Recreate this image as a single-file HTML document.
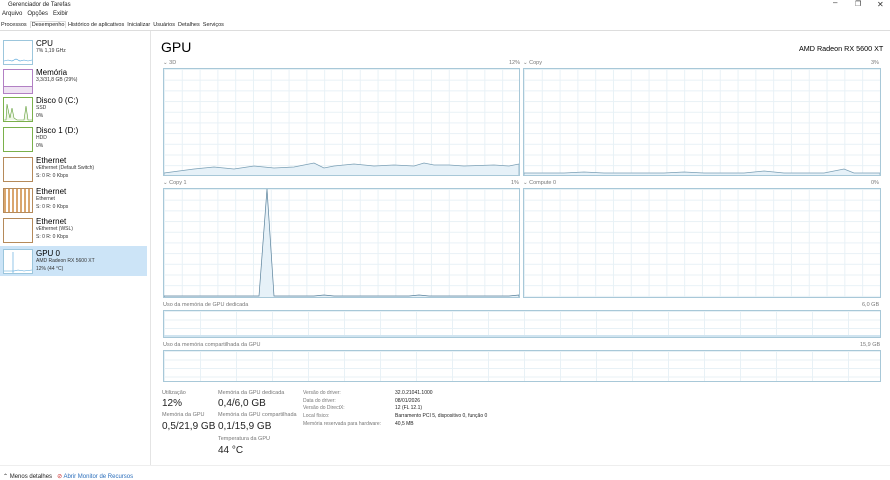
<!DOCTYPE html>
<html><head><meta charset="utf-8"><style>
*{margin:0;padding:0;box-sizing:border-box}
body{width:890px;height:480px;background:#fff;font-family:"Liberation Sans",sans-serif;color:#000;position:relative;overflow:hidden}
.a{position:absolute;white-space:nowrap}
.s{font-size:6px;color:#333}
.g{position:absolute;border:1px solid #a8c8d8;background-color:#fff;
background-image:linear-gradient(to right,#e8f1f6 1px,transparent 1px),linear-gradient(to bottom,#e8f1f6 1px,transparent 1px);
background-size:17.8px 10.7px}
.m{position:absolute;border:1px solid #a8c8d8;background-image:linear-gradient(to right,#e8f1f6 1px,transparent 1px),linear-gradient(to bottom,#e8f1f6 1px,transparent 1px);background-size:36px 8.5px}
.th{position:absolute;width:30px;height:25px;border:1px solid #9cc6dc;background:#fff}
.nm{font-size:8px}
.sb{font-size:5px;color:#333;line-height:8px}
.lab{font-size:5.5px;color:#777}
.val{font-size:10px;color:#222}
</style></head><body>
<div class="a s" style="left:8px;top:2px;color:#222">Gerenciador de Tarefas</div>
<div class="a s" style="left:2px;top:11px;color:#222">Arquivo&nbsp;&nbsp; Opções&nbsp;&nbsp; Exibir</div>
<div class="a" style="left:877px;top:0;font-size:8px;color:#333">✕</div>
<div class="a" style="left:855px;top:0;font-size:7px;color:#333">❐</div>
<div class="a" style="left:833px;top:-2px;font-size:8px;color:#333">–</div>
<div class="a" style="left:0;top:30px;width:890px;border-top:1px solid #ddd"></div>
<div class="a" style="left:1px;top:22px;color:#222;font-size:5.5px">Processos&nbsp; <span style="background:#fff;border:1px solid #ddd;border-bottom:none;padding:0 1px">Desempenho</span>&nbsp;Histórico de aplicativos&nbsp; Inicializar&nbsp; Usuários&nbsp; Detalhes&nbsp; Serviços</div>
<div class="a" style="left:150px;top:31px;height:434px;border-left:1px solid #e4e4e4"></div>

<div class="th" style="left:3px;top:40px"><svg width="28" height="23"><polyline points="0,20 4,19 8,20 12,18 16,20 20,19 24,20 28,19" fill="none" stroke="#4ca1d8" stroke-width=".6"/></svg></div>
<div class="a nm" style="left:36px;top:39px">CPU</div><div class="a sb" style="left:36px;top:47px">7% 1,19 GHz</div>
<div class="th" style="left:3px;top:69px;border-color:#b280c4"><div style="position:absolute;left:0;right:0;bottom:0;height:7px;background:#efe3f3;border-top:1px solid #b280c4"></div></div>
<div class="a nm" style="left:36px;top:68px">Memória</div><div class="a sb" style="left:36px;top:76px">3,3/31,8 GB (29%)</div>
<div class="th" style="left:3px;top:97px;border-color:#7ab04a"><svg width="28" height="23"><polyline points="0,22 2,22 3,6 5,16 6,20 8,10 10,20 13,22 20,22 22,8 24,22 28,22" fill="#eef6e6" stroke="#5a9a30" stroke-width=".6"/></svg></div>
<div class="a nm" style="left:36px;top:96px">Disco 0 (C:)</div><div class="a sb" style="left:36px;top:104px">SSD<br>0%</div>
<div class="th" style="left:3px;top:127px;border-color:#7ab04a"></div>
<div class="a nm" style="left:36px;top:126px">Disco 1 (D:)</div><div class="a sb" style="left:36px;top:134px">HDD<br>0%</div>
<div class="th" style="left:3px;top:157px;border-color:#b58a5a"></div>
<div class="a nm" style="left:36px;top:156px">Ethernet</div><div class="a sb" style="left:36px;top:164px">vEthernet (Default Switch)<br>S: 0 R: 0 Kbps</div>
<div class="th" style="left:3px;top:188px;border-color:#b58a5a;background:repeating-linear-gradient(90deg,#d9a66f 0 2px,#fff 2px 4px)"></div>
<div class="a nm" style="left:36px;top:187px">Ethernet</div><div class="a sb" style="left:36px;top:195px">Ethernet<br>S: 0 R: 0 Kbps</div>
<div class="th" style="left:3px;top:218px;border-color:#b58a5a"></div>
<div class="a nm" style="left:36px;top:217px">Ethernet</div><div class="a sb" style="left:36px;top:225px">vEthernet (WSL)<br>S: 0 R: 0 Kbps</div>
<div class="a" style="left:0;top:246px;width:147px;height:30px;background:#cce4f7"></div>
<div class="th" style="left:3px;top:249px"><svg width="28" height="23"><line x1="9" y1="2" x2="9" y2="23" stroke="#4ca1d8" stroke-width=".6"/><polyline points="0,21 10,21 14,20 20,21 28,20" fill="none" stroke="#4ca1d8" stroke-width=".6"/></svg></div>
<div class="a nm" style="left:36px;top:249px">GPU 0</div><div class="a sb" style="left:36px;top:257px">AMD Radeon RX 5600 XT<br>12% (44 °C)</div>

<div class="a" style="left:161px;top:39px;font-size:14px">GPU</div>
<div class="a" style="left:799px;top:44px;font-size:7.2px">AMD Radeon RX 5600 XT</div>

<div class="a lab" style="left:163px;top:60px">⌄ 3D</div><div class="a lab" style="left:509px;top:60px">12%</div>
<div class="a lab" style="left:523px;top:60px">⌄ Copy</div><div class="a lab" style="left:871px;top:60px">3%</div>
<div class="g" style="left:163px;top:68px;width:357px;height:108px"><svg width="355" height="106" style="position:absolute;left:0;top:0"><polyline points="0,106 0,104 30,100 50,98 70,100 90,97 110,99 130,98 150,94 160,99 170,97 190,95 210,97 230,96 250,97 260,94 270,96 285,96 300,97 330,96 345,97 355,95 355,106" fill="#e6f1f8" stroke="#7a9fb5" stroke-width=".7"/></svg></div>
<div class="g" style="left:523px;top:68px;width:358px;height:108px"><svg width="356" height="106" style="position:absolute;left:0;top:0"><polyline points="0,106 0,104 40,104 60,103 80,104 140,104 160,103 180,104 220,104 240,102 260,104 300,104 320,100 330,104 356,104 356,106" fill="#e6f1f8" stroke="#7a9fb5" stroke-width=".7"/></svg></div>

<div class="a lab" style="left:163px;top:180px">⌄ Copy 1</div><div class="a lab" style="left:511px;top:180px">1%</div>
<div class="a lab" style="left:523px;top:180px">⌄ Compute 0</div><div class="a lab" style="left:871px;top:180px">0%</div>
<div class="g" style="left:163px;top:188px;width:357px;height:110px"><svg width="355" height="108" style="position:absolute;left:0;top:0"><polyline points="0,108 0,107 95,107 103,0 110,107 150,107 160,106 170,107 245,107 255,106 265,107 345,107 355,106 355,108" fill="#e6f1f8" stroke="#58809a" stroke-width=".7"/></svg></div>
<div class="g" style="left:523px;top:188px;width:358px;height:110px"></div>

<div class="a lab" style="left:163px;top:302px">Uso da memória de GPU dedicada</div><div class="a lab" style="left:862px;top:302px">6,0 GB</div>
<div class="m" style="left:163px;top:310px;width:718px;height:28px"><div style="position:absolute;left:0;bottom:0;width:100%;height:2px;background:#d0e4f0"></div></div>
<div class="a lab" style="left:163px;top:342px">Uso da memória compartilhada da GPU</div><div class="a lab" style="left:860px;top:342px">15,9 GB</div>
<div class="m" style="left:163px;top:350px;width:718px;height:32px"></div>

<div class="a lab" style="left:162px;top:390px">Utilização</div>
<div class="a val" style="left:162px;top:398px">12%</div>
<div class="a lab" style="left:162px;top:412px">Memória da GPU</div>
<div class="a val" style="left:162px;top:421px">0,5/21,9 GB</div>
<div class="a lab" style="left:218px;top:390px">Memória da GPU dedicada</div>
<div class="a val" style="left:218px;top:398px">0,4/6,0 GB</div>
<div class="a lab" style="left:218px;top:412px">Memória da GPU compartilhada</div>
<div class="a val" style="left:218px;top:421px">0,1/15,9 GB</div>
<div class="a lab" style="left:218px;top:436px">Temperatura da GPU</div>
<div class="a val" style="left:218px;top:445px">44 °C</div>
<div class="a lab" style="left:303px;top:390px;line-height:7.7px;font-size:5px">Versão do driver:<br>Data do driver:<br>Versão do DirectX:<br>Local físico:<br>Memória reservada para hardware:</div>
<div class="a" style="left:395px;top:390px;line-height:7.7px;font-size:5px;color:#222">32.0.21041.1000<br>08/01/2026<br>12 (FL 12.1)<br>Barramento PCI 5, dispositivo 0, função 0<br>40,5 MB</div>

<div class="a" style="left:0;top:465px;width:890px;border-top:1px solid #eee"></div>
<div class="a s" style="left:3px;top:473px;color:#222">⌃ Menos detalhes&nbsp;&nbsp; <span style="color:#c33">⊘</span> <span style="color:#2a6ebb">Abrir Monitor de Recursos</span></div>
</body></html>
